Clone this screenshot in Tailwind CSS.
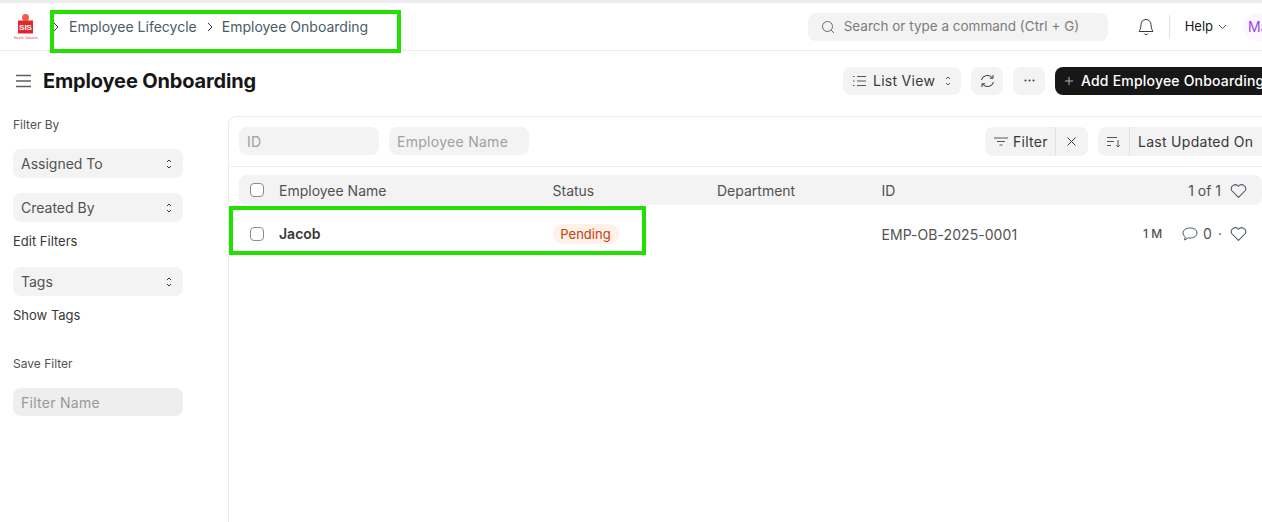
<!DOCTYPE html>
<html lang="en">
<head>
  <meta charset="UTF-8" />
  <title>Employee Onboarding</title>
  <script src="https://cdn.jsdelivr.net/npm/@tailwindcss/browser@4"></script>
</head>
<body class="relative h-[522px] w-[1262px] overflow-hidden bg-white font-['Inter',sans-serif] text-[14px] text-[#383838]">
  <!-- Navbar -->
  <header class="flex h-[51px] items-center justify-between border-t-[3px] border-b border-t-[#ededed] border-b-[#ededed] pl-[14px]">
    <div class="flex items-center">
      <svg class="h-[28px] w-[24px]" viewBox="0 0 24 28">
        <circle cx="11.500" cy="4.500" r="3.500" fill="#e8604c" />
        <rect x="4" y="7.500" width="15" height="13" fill="#e0282c" />
        <text x="11.500" y="17" text-anchor="middle" font-size="8" font-weight="700" fill="#fff" font-family="Liberation Sans">SIS</text>
        <text x="11.500" y="26" text-anchor="middle" font-size="4" fill="#e05050" font-family="Liberation Sans">South Jakarta</text>
      </svg>
      <nav class="ml-[14px] flex items-center text-[#4c5a67]">
        <svg class="h-[10px] w-[8px]" viewBox="0 0 8 10" fill="none" stroke="#383838"><path d="M2 1l4 4-4 4" /></svg>
        <span class="ml-[9px]">Employee Lifecycle</span>
        <svg class="ml-[9px] h-[10px] w-[8px]" viewBox="0 0 8 10" fill="none" stroke="#383838"><path d="M2 1l4 4-4 4" /></svg>
        <span class="ml-[8px]">Employee Onboarding</span>
      </nav>
    </div>
    <div class="flex items-center">
      <div class="flex h-[28px] w-[300px] items-center rounded-[8px] bg-[#f3f3f3] pl-[13px] text-[13.500px] text-[#7c7c7c]">
        <svg class="h-[14px] w-[14px]" viewBox="0 0 14 14" fill="none" stroke="#6b6b6b" stroke-width="1"><circle cx="6.500" cy="6.500" r="5" /><path d="M10.200 10.200L13 13" /></svg>
        <span class="ml-[9px]">Search or type a command (Ctrl + G)</span>
      </div>
      <svg class="ml-[30px] h-[18px] w-[16px]" viewBox="0 0 16 18" fill="none" stroke="#383838" stroke-width="1"><path d="M8 1.500a5 5 0 0 0-5 5c0 4-1.500 6-2 7h14c-.5-1-2-3-2-7a5 5 0 0 0-5-5z" /><path d="M6.200 15.500a2 2 0 0 0 3.600 0" /></svg>
      <div class="ml-[15px] h-[24px] w-px bg-[#e2e2e2]"></div>
      <span class="ml-[15px] text-[13px] text-[#171717]">Help</span>
      <svg class="ml-[5px] h-[6px] w-[9px]" viewBox="0 0 9 6" fill="none" stroke="#4c5a67"><path d="M1 1l3.500 3.500L8 1" /></svg>
      <div class="ml-[16px] flex h-[28px] w-[19px] items-center overflow-hidden rounded-l-full bg-[#fbf6ff] pl-[5px] text-[#9c45e3]">Ma</div>
    </div>
  </header>

  <!-- Page head -->
  <div class="flex h-[59px] items-center justify-between pl-[16px]">
    <div class="flex items-center">
      <svg class="h-[14px] w-[15px]" viewBox="0 0 15 14" stroke="#5f5f5f" stroke-width="1.400"><path d="M0 1.500h15M0 7h15M0 12.500h15" /></svg>
      <h1 class="ml-[12px] text-[20px] font-bold tracking-[-0.150px] text-[#171717]">Employee Onboarding</h1>
    </div>
    <div class="flex items-center gap-[10px]">
      <button class="flex h-[28px] w-[118px] items-center rounded-[8px] bg-[#f3f3f3] pl-[10px] tracking-[0.020em]">
        <svg class="h-[12px] w-[13px]" viewBox="0 0 13 12" fill="none" stroke="#4c5a67"><path d="M0 1.500h1.500M4 1.500h9M0 6h1.500M4 6h9M0 10.500h1.500M4 10.500h9" /></svg>
        <span class="ml-[7px]">List View</span>
        <svg class="ml-[10px] h-[12px] w-[6px]" viewBox="0 0 6 12" fill="none" stroke="#4c5a67"><path d="M1 4l2-2 2 2M1 8l2 2 2-2" /></svg>
      </button>
      <button class="flex h-[28px] w-[32px] items-center justify-center rounded-[8px] bg-[#f3f3f3]">
        <svg class="h-[14px] w-[15px]" viewBox="0 0 15 14" fill="none" stroke="#383838"><path d="M1.500 6a6 5.500 0 0 1 11-2M13.500 8a6 5.500 0 0 1-11 2" /><path d="M13 1v3.200H9.800M2 13V9.800h3.200" /></svg>
      </button>
      <button class="flex h-[28px] w-[32px] items-center justify-center rounded-[8px] bg-[#f3f3f3]">
        <svg class="h-[3px] w-[11px]" viewBox="0 0 11 3" fill="#383838"><circle cx="1.500" cy="1.500" r="1" /><circle cx="5.500" cy="1.500" r="1" /><circle cx="9.500" cy="1.500" r="1" /></svg>
      </button>
      <button class="flex h-[28px] w-[207px] shrink-0 items-center overflow-hidden whitespace-nowrap rounded-l-[8px] bg-[#171717] pl-[10px] font-medium tracking-[0.200px] text-white">
        <svg class="h-[8px] w-[8px] shrink-0" viewBox="0 0 8 8" stroke="#b5b5b5"><path d="M4 0v8M0 4h8" /></svg>
        <span class="ml-[8px]">Add Employee Onboarding</span>
      </button>
    </div>
  </div>

  <main class="flex">
    <!-- Sidebar -->
    <aside class="ml-[13px] w-[170px] shrink-0 text-[#383838]">
      <div class="mt-[8px] text-[12px] leading-[14px] text-[#525252]">Filter By</div>
      <div class="mt-[17px] flex h-[29px] items-center justify-between rounded-[8px] bg-[#f3f3f3] pl-[8px] pr-[11px] text-[#525252]">
        <span>Assigned To</span>
        <svg class="h-[12px] w-[6px]" viewBox="0 0 6 12" fill="none" stroke="#383838"><path d="M1 4l2-2 2 2M1 8l2 2 2-2" /></svg>
      </div>
      <div class="mt-[15px] flex h-[29px] items-center justify-between rounded-[8px] bg-[#f3f3f3] pl-[8px] pr-[11px] text-[#525252]">
        <span>Created By</span>
        <svg class="h-[12px] w-[6px]" viewBox="0 0 6 12" fill="none" stroke="#383838"><path d="M1 4l2-2 2 2M1 8l2 2 2-2" /></svg>
      </div>
      <div class="mt-[11px] text-[13px] leading-[16px]">Edit Filters</div>
      <div class="mt-[18px] flex h-[29px] items-center justify-between rounded-[8px] bg-[#f3f3f3] pl-[8px] pr-[11px] text-[#525252]">
        <span>Tags</span>
        <svg class="h-[12px] w-[6px]" viewBox="0 0 6 12" fill="none" stroke="#383838"><path d="M1 4l2-2 2 2M1 8l2 2 2-2" /></svg>
      </div>
      <div class="mt-[11px] text-[13px] leading-[16px]">Show Tags</div>
      <div class="mt-[34px] text-[12px] leading-[14px] text-[#525252]">Save Filter</div>
      <div class="mt-[17px] flex h-[28px] items-center rounded-[8px] bg-[#eeeeee] pl-[8px] tracking-[0.020em] text-[#999999]">Filter Name</div>
    </aside>

    <!-- List -->
    <section class="ml-[45px] mt-[6px] h-[406px] flex-1 rounded-tl-[8px] border-l border-t border-[#ededed]">
      <div class="flex h-[50px] items-center justify-between border-b border-[#ededed] pl-[10px] tracking-[0.020em]">
        <div class="-mt-[1px] flex gap-[10px] text-[#a0a0a0]">
          <div class="flex h-[28px] w-[140px] items-center rounded-[8px] bg-[#f3f3f3] pl-[8px]">ID</div>
          <div class="flex h-[28px] w-[140px] items-center rounded-[8px] bg-[#f3f3f3] pl-[8px]">Employee Name</div>
        </div>
        <div class="flex items-center gap-[10px]">
          <div class="flex h-[29px] w-[103px] items-center rounded-[8px] bg-[#f3f3f3]">
            <svg class="ml-[9px] h-[9px] w-[14px]" viewBox="0 0 14 9" stroke="#4c5a67"><path d="M0 1h14M3 4.500h8M5.500 8h3" /></svg>
            <span class="ml-[5px]">Filter</span>
            <div class="ml-[7px] h-full w-px bg-[#e2e2e2]"></div>
            <svg class="ml-[11px] h-[9px] w-[9px]" viewBox="0 0 9 9" stroke="#383838"><path d="M0.500 0.500l8 8M8.500 0.500l-8 8" /></svg>
          </div>
          <div class="flex h-[29px] w-[164px] items-center rounded-l-[8px] bg-[#f3f3f3]">
            <svg class="ml-[9px] h-[12px] w-[14px]" viewBox="0 0 14 12" fill="none" stroke="#4c5a67"><path d="M0 1.500h10M0 5.500h7M0 9.500h4M11 4v7M9.300 9.300l1.700 1.700 1.700-1.700" /></svg>
            <div class="ml-[8px] h-full w-px bg-[#e2e2e2]"></div>
            <span class="ml-[8px] whitespace-nowrap">Last Updated On</span>
          </div>
        </div>
      </div>

      <div class="ml-[10px] mt-[8px] flex h-[30px] items-center rounded-[8px] bg-[#f3f3f3] text-[#525252]">
        <div class="ml-[11px] h-[14px] w-[14px] rounded-[4px] border border-[#8d8d8d] bg-white"></div>
        <span class="ml-[15px] w-[273.500px]">Employee Name</span>
        <span class="w-[164.500px]">Status</span>
        <span class="w-[164.500px]">Department</span>
        <span>ID</span>
        <span class="ml-auto">1 of 1</span>
        <svg class="ml-[9px] mr-[15px] h-[15px] w-[17px]" viewBox="0 0 16 14" fill="none" stroke="#4c5a67"><path d="M8 13.500L1.600 7A3.800 3.800 0 0 1 8 3a3.800 3.800 0 0 1 6.400 4z" /></svg>
      </div>

      <div class="ml-[10px] flex h-[57px] items-center">
        <div class="ml-[11px] h-[14px] w-[14px] rounded-[4px] border border-[#8d8d8d] bg-white"></div>
        <span class="ml-[15px] w-[273.500px] font-semibold text-[#383838]">Jacob</span>
        <span class="w-[164.500px]"><span class="inline-block h-[20px] w-[66px] rounded-full bg-[#fff0e8] text-center text-[13px] leading-[20px] text-[#c2410c]">Pending</span></span>
        <span class="w-[164.500px]"></span>
        <span class="mt-[2px] whitespace-nowrap tracking-[0.060px] text-[#525252]">EMP-OB-2025-0001</span>
        <span class="ml-auto mt-[1px] text-[12px] font-medium text-[#525252]">1 M</span>
        <svg class="ml-[20px] h-[14px] w-[16px]" viewBox="0 0 16 14" fill="none" stroke="#4c5a67"><path d="M8 1C4 1 1 3 1 6c0 1.600.9 2.900 2.300 3.800L2.500 13l3.600-2.100c.6.1 1.200.1 1.900.1 4 0 7-2 7-5s-3-5-7-5z" /></svg>
        <span class="ml-[5px] text-[#525252]">0</span>
        <span class="ml-[6px] text-[#525252]">·</span>
        <svg class="ml-[8px] mr-[15px] h-[15px] w-[17px]" viewBox="0 0 16 14" fill="none" stroke="#4c5a67"><path d="M8 13.500L1.600 7A3.800 3.800 0 0 1 8 3a3.800 3.800 0 0 1 6.400 4z" /></svg>
      </div>
    </section>
  </main>

  <!-- Green annotation boxes drawn over the screenshot -->
  <div class="absolute left-[50px] top-[10px] h-[43px] w-[351px] border-[4px] border-[#22e000]"></div>
  <div class="absolute left-[229px] top-[206px] h-[49px] w-[417px] border-[4px] border-[#22e000]"></div>
</body>
</html>
